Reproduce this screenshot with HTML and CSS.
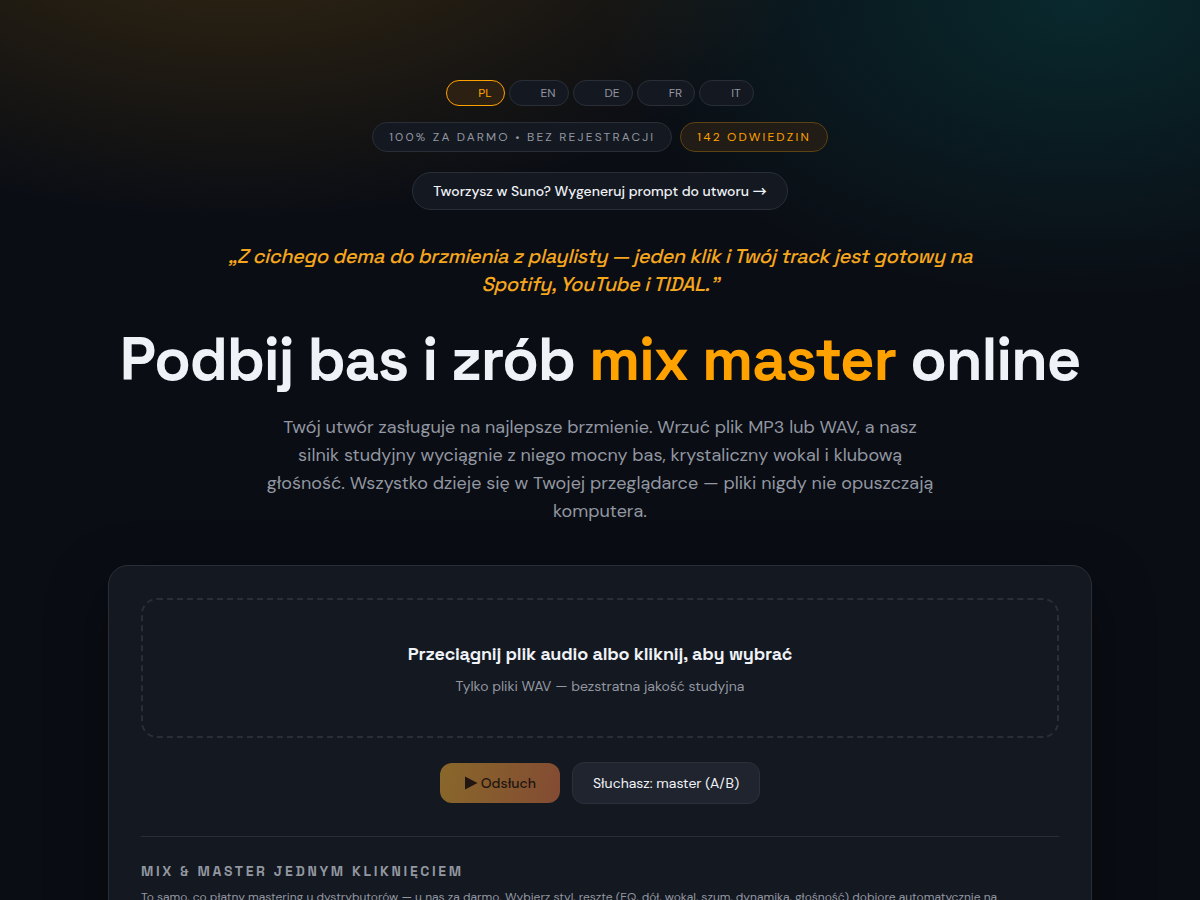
FILE: index.html
```html
<!DOCTYPE html>
<html lang="pl">
  <head>
    <meta charset="UTF-8" />
    <meta name="viewport" content="width=device-width, initial-scale=1.0" />
    <title>Podbij bas i zrób mix master online</title>
    <link rel="stylesheet" href="styles.css">
  </head>
  <body>
    <main class="container">
      <header class="hero">
        <nav class="langs" aria-label="Język">
          <a class="lang active" href="#pl">PL</a>
          <a class="lang" href="#en">EN</a>
          <a class="lang" href="#de">DE</a>
          <a class="lang" href="#fr">FR</a>
          <a class="lang" href="#it">IT</a>
        </nav>

        <div class="badges">
          <span class="badge">100% za darmo • bez rejestracji</span>
          <span class="badge badge-visits">142 odwiedzin</span>
        </div>

        <a class="suno-link" href="#suno">Tworzysz w Suno? Wygeneruj prompt do utworu <span class="arrow">→</span></a>

        <p class="quote">„Z cichego dema do brzmienia z playlisty — jeden klik i Twój track jest gotowy na Spotify, YouTube i TIDAL.”</p>
        <h1>Podbij bas i zrób <span class="accent">mix master</span> online</h1>
        <p class="lead">Twój utwór zasługuje na najlepsze brzmienie. Wrzuć plik MP3 lub WAV, a nasz silnik studyjny wyciągnie z niego mocny bas, krystaliczny wokal i klubową głośność. Wszystko dzieje się w Twojej przeglądarce — pliki nigdy nie opuszczają komputera.</p>
      </header>

      <section class="panel">
        <button class="dropzone" type="button">
          <span class="drop-title">Przeciągnij plik audio albo kliknij, aby wybrać</span>
          <span class="drop-hint">Tylko pliki WAV — bezstratna jakość studyjna</span>
        </button>

        <div class="player">
          <button class="btn btn-play" type="button" disabled>
            <svg width="14" height="14" viewBox="0 0 14 14" aria-hidden="true"><path d="M1 0.5 L13.5 7 L1 13.5 Z" fill="currentColor" /></svg>
            Odsłuch
          </button>
          <button class="btn btn-ab" type="button">Słuchasz: master (A/B)</button>
        </div>

        <div class="presets">
          <h2>Mix &amp; master jednym kliknięciem</h2>
          <p>To samo, co płatny mastering u dystrybutorów — u nas za darmo. Wybierz styl, resztę (EQ, dół, wokal, szum, dynamika, głośność) dobiorę automatycznie na podstawie utworu.</p>
        </div>
      </section>
    </main>
  </body>
</html>
```
FILE: styles.css
```css
:root {
  --bg: #0a0d14;
  --panel: #141820;
  --raised: #20242e;
  --line: #2a2e37;
  --text: #eff2f7;
  --muted: #9297a1;
  --amber: #ffa200;
  --display: "Space Grotesk", Inter, sans-serif;
  --body: "DM Sans", "Open Sans", sans-serif;
}

* {
  box-sizing: border-box;
}

body {
  margin: 0;
  min-height: 100vh;
  font-family: var(--body);
  color: var(--text);
  background:
    radial-gradient(ellipse 1000px 540px at 20% -10%, rgba(255, 165, 0, 0.18), transparent 60%),
    radial-gradient(ellipse 800px 500px at 90% 0%, rgba(0, 200, 190, 0.15), transparent 60%),
    var(--bg);
}

.container {
  max-width: 1080px;
  margin: 0 auto;
  padding: 80px 48px;
}

.hero {
  display: flex;
  flex-direction: column;
  align-items: center;
  text-align: center;
}

.langs {
  display: flex;
  gap: 4px;
}

.lang {
  padding: 4px 12px 4px 31px;
  border: 1px solid var(--line);
  border-radius: 999px;
  background: var(--panel);
  color: var(--muted);
  font-size: 12px;
  line-height: 16px;
  text-decoration: none;
}

.lang.active {
  border-color: var(--amber);
  background: #2c2013;
  color: var(--amber);
}

.badges {
  display: flex;
  flex-wrap: wrap;
  justify-content: center;
  gap: 8px;
  margin-top: 16px;
}

.badge {
  padding: 6px 16px;
  border: 1px solid var(--line);
  border-radius: 999px;
  background: var(--panel);
  color: var(--muted);
  font-size: 12px;
  line-height: 16px;
  letter-spacing: 0.18em;
  text-transform: uppercase;
}

.badge-visits {
  border-color: #5e4312;
  background: #211c15;
  color: var(--amber);
}

.suno-link {
  margin-top: 20px;
  padding: 8px 20px;
  border: 1px solid var(--line);
  border-radius: 999px;
  background: var(--panel);
  color: var(--text);
  font-size: 14px;
  font-weight: 500;
  line-height: 20px;
  text-decoration: none;
}

.arrow {
  font-family: "Noto Sans CJK JP", sans-serif;
  line-height: 1;
}

.quote {
  max-width: 768px;
  margin: 32px 0 0;
  color: #f5a61d;
  font-family: var(--display);
  font-size: 20px;
  font-style: italic;
  font-weight: 500;
  line-height: 28px;
  letter-spacing: -0.02em;
}

h1 {
  margin: 29px 0 0;
  font-family: var(--display);
  font-size: 60px;
  font-weight: 700;
  line-height: 66px;
  letter-spacing: -0.02em;
}

.accent {
  color: var(--amber);
}

.lead {
  max-width: 672px;
  margin: 20px 0 0;
  color: var(--muted);
  font-size: 18px;
  line-height: 28px;
}

.panel {
  margin-top: 40px;
  padding: 32px;
  border: 1px solid var(--line);
  border-radius: 20px;
  background: var(--panel);
  box-shadow: 0 20px 60px rgba(0, 0, 0, 0.4);
}

.dropzone {
  display: flex;
  flex-direction: column;
  align-items: center;
  gap: 8px;
  width: 100%;
  padding: 40px 24px;
  border: 2px dashed var(--line);
  border-radius: 16px;
  background: transparent;
  color: var(--text);
  cursor: pointer;
}

.drop-title {
  font-family: var(--display);
  font-size: 18px;
  font-weight: 600;
  line-height: 28px;
  letter-spacing: -0.01em;
}

.drop-hint {
  color: var(--muted);
  font-family: var(--body);
  font-size: 14px;
  line-height: 20px;
}

.player {
  display: flex;
  flex-wrap: wrap;
  align-items: center;
  justify-content: center;
  gap: 12px;
  margin-top: 24px;
}

.btn {
  padding: 10px 20px;
  border: 1px solid #2c3039;
  border-radius: 12px;
  background: var(--raised);
  color: var(--text);
  font-family: var(--body);
  font-size: 14px;
  line-height: 20px;
}

.btn-play {
  display: flex;
  align-items: center;
  gap: 3px;
  padding: 10px 24px;
  border: none;
  background: linear-gradient(100deg, #89672a, #834b33);
  color: #201510;
  font-weight: 500;
}

.presets {
  margin-top: 32px;
  padding-top: 24px;
  border-top: 1px solid var(--line);
}

.presets h2 {
  margin: 0;
  color: var(--muted);
  font-family: var(--display);
  font-size: 14px;
  font-weight: 600;
  line-height: 20px;
  letter-spacing: 0.19em;
  text-transform: uppercase;
}

.presets p {
  max-width: 896px;
  margin: 8px 0 0;
  color: var(--muted);
  font-size: 12px;
  line-height: 16px;
}
```
